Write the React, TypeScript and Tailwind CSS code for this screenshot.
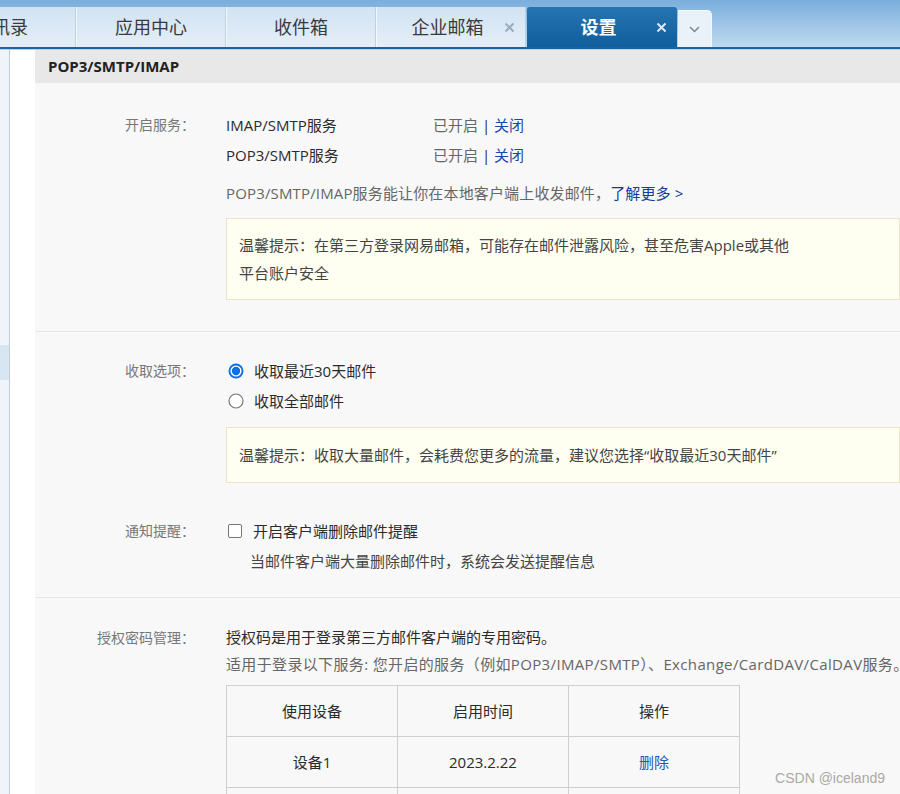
import React from "react";

const CloseIcon = ({ color }: { color: string }) => (
	<svg width="11" height="11" viewBox="0 0 11 11">
		<path d="M1.5 1.5 L9.5 9.5 M9.5 1.5 L1.5 9.5" stroke={color} strokeWidth="2" />
	</svg>
);

const Tab = ({
	label,
	closable = false,
	className = "",
}: {
	label: string;
	closable?: boolean;
	className?: string;
}) => (
	<div
		className={`flex items-center h-[40px] w-[150px] shrink-0 border-l border-l-[#f3f8fc] border-r border-r-[#bcd1e4] bg-gradient-to-b from-[#d2e3f3] to-[#e4eef8] ${className}`}
	>
		<span
			className={`flex-1 text-center text-[18px] text-[#3a3a3a] ${closable ? "pl-[14px]" : ""}`}
		>
			{label}
		</span>
		{closable && (
			<span className="w-[11px] mr-[10px] flex">
				<CloseIcon color="#9aabbc" />
			</span>
		)}
	</div>
);

const Label = ({ children }: { children: React.ReactNode }) => (
	<div className="w-[160px] shrink-0 text-right text-[14px] text-[#777]">
		{children}
	</div>
);

const Radio = ({ checked }: { checked?: boolean }) => (
	<svg width="16" height="16" viewBox="0 0 16 16" className="ml-[2px] shrink-0">
		{checked ? (
			<>
				<circle cx="8" cy="8" r="7.5" fill="#0d6fe8" />
				<circle cx="8" cy="8" r="5.6" fill="#fff" />
				<circle cx="8" cy="8" r="4.2" fill="#0d6fe8" />
			</>
		) : (
			<circle cx="8" cy="8" r="7" fill="#fff" stroke="#767676" strokeWidth="1.2" />
		)}
	</svg>
);

const App = () => {
	return (
		<div className="w-[900px] h-[794px] overflow-hidden relative bg-white [font-family:'Open_Sans','Noto_Sans_CJK_SC',sans-serif]">
			{/* Top tab bar */}
			<div className="bg-gradient-to-b from-[#7aaedc] to-[#c5dcf0]">
				<div className="pt-[7px]">
					<div className="flex items-end h-[40px]">
						<Tab label="通讯录" className="ml-[-74px]" />
						<Tab label="应用中心" />
						<Tab label="收件箱" />
						<Tab label="企业邮箱" closable />
						<div className="flex items-center h-[40px] w-[150px] shrink-0 ml-[1px] rounded-t-[3px] bg-gradient-to-b from-[#2574b2] to-[#115e9c]">
							<span className="flex-1 text-center text-[18px] font-bold text-white pl-[14px]">
								设置
							</span>
							<span className="w-[11px] mr-[10px] flex">
								<CloseIcon color="#dfeaf5" />
							</span>
						</div>
						<div className="flex items-center justify-center h-[37px] w-[34px] ml-[1px] rounded-tr-[5px] bg-[#e9f1f9] border-t border-r border-[#f6f9fc]">
							<svg width="11" height="7" viewBox="0 0 11 7">
								<path d="M1 1 L5.5 5.5 L10 1" stroke="#7b8794" strokeWidth="1.5" fill="none" />
							</svg>
						</div>
					</div>
				</div>
				<div className="h-[2px] bg-[#1b63a3]" />
				<div className="h-[1px] bg-[#c9ced3]" />
			</div>

			<div className="flex h-[744px]">
				{/* Left sidebar strip */}
				<div className="w-[10px] shrink-0 bg-[#eef4fa] border-r border-[#c3ccd5]">
					<div className="h-[295px]" />
					<div className="h-[35px] bg-[#d7e6f3]" />
				</div>
				<div className="w-[25px] shrink-0 bg-white" />

				{/* Content */}
				<div className="flex-1 bg-[#f8f8f8] overflow-hidden">
					<div className="h-[33px] bg-[#e8e8e8] pl-[13px] text-[15px] font-bold text-[#222] leading-[33px]">
						POP3/SMTP/IMAP
					</div>

					{/* 开启服务 */}
					<div className="pt-[27px] pb-[31px] border-b border-[#e6e6e6] flex text-[15px] text-[#2b2b2b]">
						<Label>
							<div className="leading-[30px]">开启服务：</div>
						</Label>
						<div className="ml-[31px]">
							<div className="flex leading-[30px]">
								<span className="w-[207px]">IMAP/SMTP服务</span>
								<span>
									<span className="text-[#666]">已开启</span> |{" "}
									<span className="text-[#1b45a8]">关闭</span>
								</span>
							</div>
							<div className="flex leading-[30px]">
								<span className="w-[207px]">POP3/SMTP服务</span>
								<span>
									<span className="text-[#666]">已开启</span> |{" "}
									<span className="text-[#1b45a8]">关闭</span>
								</span>
							</div>
							<div className="mt-[8px] leading-[30px] text-[#666] tracking-[0.15px]">
								POP3/SMTP/IMAP服务能让你在本地客户端上收发邮件，
								<span className="text-[#0b3d9e]">了解更多 &gt;</span>
							</div>
							<div className="mt-[10px] w-[674px] border border-[#e8e6c9] bg-[#fefff0] px-[12px] py-[12px] leading-[28px] text-[#444]">
								温馨提示：在第三方登录网易邮箱，可能存在邮件泄露风险，甚至危害Apple或其他
								<br />
								平台账户安全
							</div>
						</div>
					</div>

					{/* 收取选项 / 通知提醒 */}
					<div className="pt-[24px] pb-[21px] border-b border-[#e6e6e6] text-[15px] text-[#2b2b2b]">
						<div className="flex">
							<Label>
								<div className="leading-[30px]">收取选项：</div>
							</Label>
							<div className="ml-[31px]">
								<div className="flex items-center h-[30px]">
									<Radio checked />
									<span className="ml-[10px]">收取最近30天邮件</span>
								</div>
								<div className="flex items-center h-[30px]">
									<Radio />
									<span className="ml-[10px]">收取全部邮件</span>
								</div>
								<div className="mt-[11px] w-[674px] border border-[#e8e6c9] bg-[#fefff0] px-[12px] py-[13px] leading-[28px] text-[#444]">
									温馨提示：收取大量邮件，会耗费您更多的流量，建议您选择“收取最近30天邮件”
								</div>
							</div>
						</div>
						<div className="flex mt-[33px]">
							<Label>
								<div className="leading-[30px]">通知提醒：</div>
							</Label>
							<div className="ml-[31px]">
								<div className="flex items-center h-[30px]">
									<span className="ml-[2px] w-[14px] h-[14px] rounded-[2px] border-[1.5px] border-[#767676] bg-white shrink-0" />
									<span className="ml-[11px]">开启客户端删除邮件提醒</span>
								</div>
								<div className="leading-[30px] pl-[24px] text-[#444]">
									当邮件客户端大量删除邮件时，系统会发送提醒信息
								</div>
							</div>
						</div>
					</div>

					{/* 授权密码管理 */}
					<div className="pt-[26px] flex text-[15px] text-[#2b2b2b]">
						<Label>
							<div className="leading-[27px]">授权密码管理：</div>
						</Label>
						<div className="ml-[31px] flex-1 min-w-0">
							<div className="leading-[27px]">
								授权码是用于登录第三方邮件客户端的专用密码。
							</div>
							<div className="leading-[27px] text-[#666] whitespace-nowrap tracking-[0.35px]">
								适用于登录以下服务: 您开启的服务（例如POP3/IMAP/SMTP）、Exchange/CardDAV/CalDAV服务。
							</div>
							<table className="mt-[7px] w-[514px] border-collapse table-fixed">
								<tbody>
									<tr className="h-[51px]">
										<td className="border border-[#cfcfcf] text-center">使用设备</td>
										<td className="border border-[#cfcfcf] text-center">启用时间</td>
										<td className="border border-[#cfcfcf] text-center">操作</td>
									</tr>
									<tr className="h-[51px]">
										<td className="border border-[#cfcfcf] text-center">设备1</td>
										<td className="border border-[#cfcfcf] text-center">2023.2.22</td>
										<td className="border border-[#cfcfcf] text-center text-[#2456b8]">删除</td>
									</tr>
									<tr className="h-[51px]">
										<td className="border border-[#cfcfcf]" />
										<td className="border border-[#cfcfcf]" />
										<td className="border border-[#cfcfcf]" />
									</tr>
								</tbody>
							</table>
						</div>
					</div>
				</div>
			</div>

			{/* Watermark */}
			<div className="absolute right-[15px] bottom-[5px] text-[14px] text-[#a9a9a9] [font-family:'Liberation_Sans',sans-serif]">
				CSDN @iceland9
			</div>
		</div>
	);
};

export default App;
